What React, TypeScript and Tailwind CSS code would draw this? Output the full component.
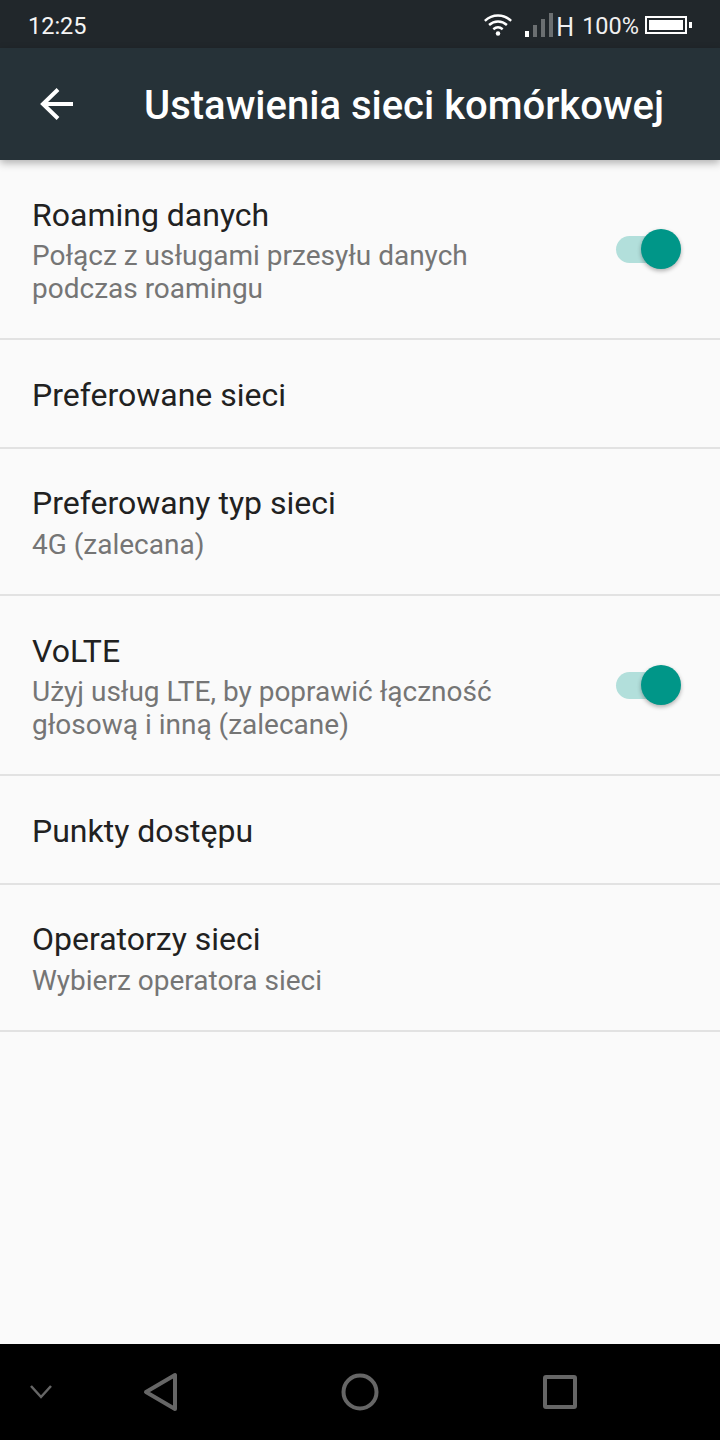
import React from "react";

function Toggle() {
  return (
    <div className="relative w-[66px] h-[42px] shrink-0">
      <div className="absolute left-[0px] top-[8px] w-[52px] h-[27px] rounded-full bg-[#b2dfdb]" />
      <div className="absolute left-[25px] top-[1px] w-[40px] h-[40px] rounded-full bg-[#009688] shadow-[0_2px_4px_rgba(0,0,0,0.3)]" />
    </div>
  );
}

function Row({ title, sub, toggle, h }: { title: string; sub?: string[]; toggle?: boolean; h: string }) {
  const two = !!sub && sub.length > 1;
  return (
    <div className={`flex items-center justify-between pl-[32px] pr-[38px] border-b-2 border-[#e2e2e2] ${h}`}>
      <div className={`flex flex-col ${two ? "mt-[3px]" : "mt-[2px]"}`}>
        <div className="text-[32px] leading-[38px] text-[#212121]">{title}</div>
        {sub && (
          <div className={two ? "mt-[5px]" : "mt-[6px]"}>
            {sub.map((s) => (
              <div key={s} className="text-[28px] leading-[33px] text-[#757575]">{s}</div>
            ))}
          </div>
        )}
      </div>
      {toggle && <Toggle />}
    </div>
  );
}

export default function App() {
  return (
    <div className="w-[720px] h-[1440px] flex flex-col bg-[#fafafa] font-['Roboto',sans-serif] overflow-hidden">
      <div className="h-[48px] pt-[2px] bg-[#21272b] flex items-center justify-between pl-[28px] pr-[28px] text-white shrink-0">
        <span className="mt-[4px] text-[23.5px] leading-none text-[#f5f5f5]">12:25</span>
        <div className="flex items-center">
          <svg width="30" height="26" viewBox="0 0 32 26" fill="none" stroke="white" strokeWidth="2.6">
            <path d="M2 8.5 C10 1 22 1 30 8.5" />
            <path d="M6.5 13 C12 8 20 8 25.5 13" />
            <path d="M11 17.5 C14 15 18 15 21 17.5" />
            <circle cx="16" cy="22" r="2.4" fill="white" stroke="none" />
          </svg>
          <svg className="ml-[12px]" width="30" height="26" viewBox="0 0 30 26">
            <rect x="0" y="19" width="4" height="6" fill="#ffffff" />
            <rect x="8" y="13" width="4" height="12" fill="#6b6f71" />
            <rect x="16" y="7" width="4" height="18" fill="#6b6f71" />
            <rect x="24" y="1" width="4" height="24" fill="#6b6f71" />
          </svg>
          <span className="mt-[4px] text-[25px] leading-none ml-[1px] text-[#f0f0f0]">H</span>
          <span className="mt-[4px] text-[23.5px] leading-none ml-[8px] text-[#f0f0f0]">100%</span>
          <div className="ml-[6px] w-[42px] h-[18px] border-2 border-white p-[2px]">
            <div className="w-full h-full bg-white" />
          </div>
          <div className="ml-[2px] w-[3px] h-[6px] bg-white" />
        </div>
      </div>
      <div className="relative z-10 h-[112px] bg-[#263238] flex items-center shadow-[0_3px_8px_rgba(0,0,0,0.3)] shrink-0">
        <svg className="ml-[40px]" width="34" height="32" viewBox="0 0 34 32" fill="none" stroke="white" strokeWidth="4">
          <path d="M33 16 H3" />
          <path d="M18 1.5 L3 16 L18 30.5" />
        </svg>
        <span className="ml-[70px] mt-[4px] text-[40px] font-medium text-white leading-none">Ustawienia sieci komórkowej</span>
      </div>
      <div className="flex-1 flex flex-col">
        <Row h="h-[180px]" title="Roaming danych" sub={["Połącz z usługami przesyłu danych", "podczas roamingu"]} toggle />
        <Row h="h-[109px]" title="Preferowane sieci" />
        <Row h="h-[147px]" title="Preferowany typ sieci" sub={["4G (zalecana)"]} />
        <Row h="h-[180px]" title="VoLTE" sub={["Użyj usług LTE, by poprawić łączność", "głosową i inną (zalecane)"]} toggle />
        <Row h="h-[109px]" title="Punkty dostępu" />
        <Row h="h-[147px]" title="Operatorzy sieci" sub={["Wybierz operatora sieci"]} />
      </div>
      <div className="h-[96px] bg-black flex items-center shrink-0">
        <svg className="ml-[29px]" width="24" height="16" viewBox="0 0 24 16" fill="none" stroke="#666" strokeWidth="2.5">
          <path d="M2 2 L12 13 L22 2" />
        </svg>
        <svg className="ml-[90px]" width="36" height="40" viewBox="0 0 36 40" fill="none" stroke="#666" strokeWidth="4" strokeLinejoin="round">
          <path d="M32 3 V37 L3 20 Z" />
        </svg>
        <svg className="ml-[162px]" width="38" height="38" viewBox="0 0 38 38" fill="none" stroke="#666" strokeWidth="4">
          <circle cx="19" cy="19" r="16.5" />
        </svg>
        <svg className="ml-[164px]" width="34" height="34" viewBox="0 0 34 34" fill="none" stroke="#666" strokeWidth="4" strokeLinejoin="round">
          <rect x="2" y="2" width="30" height="30" rx="1" />
        </svg>
      </div>
    </div>
  );
}
